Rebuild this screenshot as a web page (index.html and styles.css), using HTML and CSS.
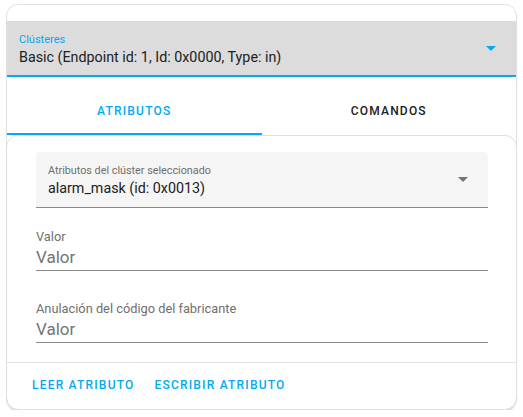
FILE: index.html
```html
<!DOCTYPE html>
<html lang="es">
<head>
<meta charset="utf-8">
<link rel="stylesheet" href="styles.css">
</head>
<body>
<div class="card">
  <div class="cluster-select">
    <div class="sel-text">
      <div class="sel-label blue">Clústeres</div>
      <div class="sel-value">Basic (Endpoint id: 1, Id: 0x0000, Type: in)</div>
    </div>
    <svg class="arrow" width="10" height="5" viewBox="0 0 10 5"><path d="M0 0h10L5 5z" fill="#03a9f4"/></svg>
  </div>
  <div class="tabs">
    <div class="tab active">ATRIBUTOS</div>
    <div class="tab">COMANDOS</div>
  </div>
  <div class="inner">
    <div class="content">
      <div class="attr-select">
        <div class="sel-text">
          <div class="sel-label">Atributos del clúster seleccionado</div>
          <div class="sel-value">alarm_mask (id: 0x0013)</div>
        </div>
        <svg class="arrow" width="10" height="5" viewBox="0 0 10 5"><path d="M0 0h10L5 5z" fill="#757575"/></svg>
      </div>
      <div class="field">
        <div class="field-label">Valor</div>
        <div class="field-input">Valor</div>
      </div>
      <div class="field">
        <div class="field-label">Anulación del código del fabricante</div>
        <div class="field-input">Valor</div>
      </div>
    </div>
    <div class="actions">
      <span class="btn">LEER ATRIBUTO</span>
      <span class="btn">ESCRIBIR ATRIBUTO</span>
    </div>
  </div>
</div>
</body>
</html>
```
FILE: styles.css
```css
* { box-sizing: border-box; }
html, body { margin: 0; padding: 0; background: #fff; }
body {
  font-family: Roboto, "Noto Sans", sans-serif;
  color: #212121;
  padding: 4px 6px 0 6px;
}
.card {
  width: 511px;
  border: 1px solid #e0e0e0;
  border-radius: 12px;
  padding-top: 16px;
  box-shadow: 0 2px 2px -1px rgba(0,0,0,0.12);
}
.cluster-select {
  height: 56px;
  background: #dcdcdc;
  border-bottom: 2px solid #03a9f4;
  display: flex;
  align-items: center;
  padding: 0 20px 0 12px;
}
.sel-text { flex: 1; display: flex; flex-direction: column; padding-top: 4px; }
.sel-label { font-size: 11px; line-height: 14px; color: #6f6f6f; }
.attr-select .sel-label { font-size: 10.8px; }
.sel-label.blue { color: #03a9f4; }
.sel-value { font-size: 14.3px; line-height: 20px; color: #212121; }
.attr-select .sel-text { padding-top: 3px; }
.arrow { flex: none; }
.tabs {
  display: flex;
  margin-top: 10px;
  height: 48px;
}
.tab {
  flex: 1;
  display: flex;
  align-items: center;
  justify-content: center;
  font-size: 12px;
  font-weight: 500;
  letter-spacing: 1.2px;
  color: #212121;
}
.tab.active {
  color: #03a9f4;
  border-bottom: 2px solid #03a9f4;
  padding-top: 2px;
}
.inner {
  border: 1px solid #e0e0e0;
  border-radius: 12px;
  margin: 0 -1px -1px -1px;
  box-shadow: 0 2px 2px -1px rgba(0,0,0,0.15);
}
.content {
  padding: 16px 28px 19px 29px;
}
.attr-select {
  height: 56px;
  background: #f5f5f5;
  border-radius: 4px 4px 0 0;
  border-bottom: 1px solid #8a8a8a;
  display: flex;
  align-items: center;
  padding: 0 20px 0 12px;
}
.field {
  margin-top: 21px;
  border-bottom: 1px solid #8a8a8a;
  padding-bottom: 3px;
}
.field + .field { margin-top: 30px; }
.field-label { font-size: 12.8px; line-height: 16px; color: #6f6f6f; }
.field-input { font-size: 17px; line-height: 20px; color: #757575; margin-top: 2px; }
.actions {
  border-top: 1px solid #e0e0e0;
  display: flex;
  gap: 20px;
  padding: 15px 0 17px 25px;
}
.btn {
  font-size: 12px;
  font-weight: 500;
  letter-spacing: 1.2px;
  color: #03a9f4;
}
```
